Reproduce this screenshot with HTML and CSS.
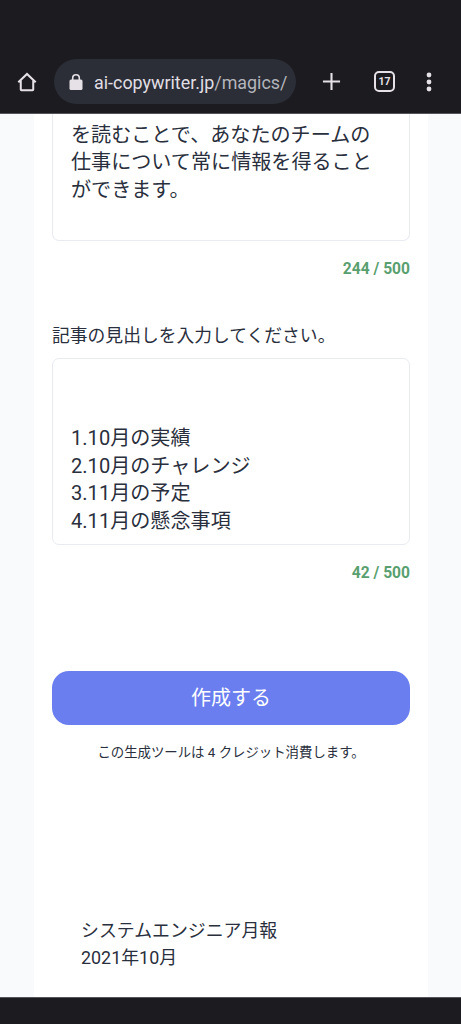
FILE: index.html
```html
<!DOCTYPE html>
<html lang="ja">
<head>
<meta charset="utf-8">
<title>AI Copywriter</title>
<link rel="stylesheet" href="styles.css">
</head>
<body>
<header class="browser">
  <svg class="home" viewBox="0 0 24 24"><path d="M2.5 12.2 12 3.2l9.5 9M5.2 10v10.2q0 .7.7.7h12.2q.7 0 .7-.7V10"/></svg>
  <div class="address">
    <svg class="lock" viewBox="0 0 14 18"><path class="shackle" d="M3.7 8V5a3.3 3.3 0 0 1 6.6 0v3"/><rect x=".5" y="6.5" width="13" height="10.5" rx="1.5"/></svg>
    <span class="url">ai-copywriter.jp<span class="path">/magics/</span></span>
  </div>
  <svg class="plus" viewBox="0 0 20 20"><path d="M10 1v18M1 10h18"/></svg>
  <div class="tabs">17</div>
  <svg class="more" viewBox="0 0 6 20"><circle cx="3" cy="3" r="2.4"/><circle cx="3" cy="10" r="2.4"/><circle cx="3" cy="17" r="2.4"/></svg>
</header>
<main class="page">
  <section class="sheet">
    <div class="field field-summary"><p>を読むことで、あなたのチームの</p><p>仕事について常に情報を得ること</p><p>ができます。</p></div>
    <div class="count">244 / 500</div>
    <div class="label">記事の見出しを入力してください。</div>
    <div class="field field-headings"><p>1.10月の実績</p><p>2.10月のチャレンジ</p><p>3.11月の予定</p><p>4.11月の懸念事項</p></div>
    <div class="count">42 / 500</div>
    <button class="create">作成する</button>
    <div class="note">この生成ツールは 4 クレジット消費します。</div>
    <div class="result"><p>システムエンジニア月報</p><p>2021年10月</p></div>
  </section>
</main>
<footer class="navbar"></footer>
</body>
</html>
```
FILE: styles.css
```css
* { box-sizing: border-box; }
body {
  margin: 0;
  height: 1024px;
  overflow: hidden;
  display: flex;
  flex-direction: column;
  font-family: Roboto, "Noto Sans CJK JP", sans-serif;
  color: #2a2f3d;
  background: #f8fafc;
}
p { margin: 0; }
.browser {
  flex: none;
  height: 114px;
  padding: 50px 0 0 16px;
  display: flex;
  align-items: center;
  background: #1c1b20;
  border-bottom: 1px solid #55545a;
}
.home { width: 22px; height: 22px; fill: none; stroke: #e5e1e6; stroke-width: 2.2; }
.address {
  width: 242px;
  height: 45px;
  margin: 0 0 0 16px;
  padding-left: 15px;
  display: flex;
  align-items: center;
  border-radius: 23px;
  background: #2b2e36;
}
.lock { width: 14px; height: 18px; fill: #e5e1e6; }
.shackle { fill: none; stroke: #e5e1e6; stroke-width: 1.6; }
.url { margin-left: 11px; padding-top: 1px; font-size: 17.9px; color: #e1dfe5; white-space: nowrap; }
.path { color: #b5b5bc; }
.plus { width: 19px; height: 19px; margin-left: 26px; fill: none; stroke: #e5e1e6; stroke-width: 2.2; }
.tabs {
  width: 21px;
  height: 21px;
  margin-left: 33px;
  border: 2px solid #e5e1e6;
  border-radius: 5px;
  color: #e5e1e6;
  font-size: 10.5px;
  font-weight: 700;
  line-height: 17px;
  text-align: center;
}
.more { width: 6px; height: 20px; margin-left: 31px; fill: #e5e1e6; }
.page { flex: 1; min-height: 0; overflow: hidden; padding: 0 33px 0 34px; }
.sheet { height: 100%; padding: 0 18px; background: #fff; }
.field {
  padding: 0 18px;
  border: 1px solid #e9ebf2;
  border-radius: 7px;
  font-size: 20.1px;
  line-height: 27.6px;
  white-space: nowrap;
}
.field-summary { height: 127px; padding-top: 7.6px; border-top: 0; border-radius: 0 0 7px 7px; }
.count {
  margin-top: 18px;
  height: 20px;
  text-align: right;
  font-size: 15.6px;
  font-weight: 700;
  line-height: 20px;
  color: #5a9f70;
}
.label { margin-top: 42px; height: 30px; line-height: 30px; font-size: 17.8px; }
.field-headings { height: 187px; margin-top: 7px; padding-top: 66px; }
.create {
  display: block;
  width: 100%;
  height: 54px;
  margin-top: 88px;
  padding: 0;
  border: 0;
  border-radius: 17px;
  background: #6a7eef;
  color: #fff;
  font: 20px/53px Roboto, "Noto Sans CJK JP", sans-serif;
}
.note { margin-top: 18px; height: 20px; line-height: 20px; font-size: 13.4px; text-align: center; }
.result { margin-top: 154px; padding-left: 29px; font-size: 17.9px; line-height: 27.4px; }
.navbar { flex: none; height: 27px; background: #1c1b20; border-top: 1px solid #55545a; }
```
